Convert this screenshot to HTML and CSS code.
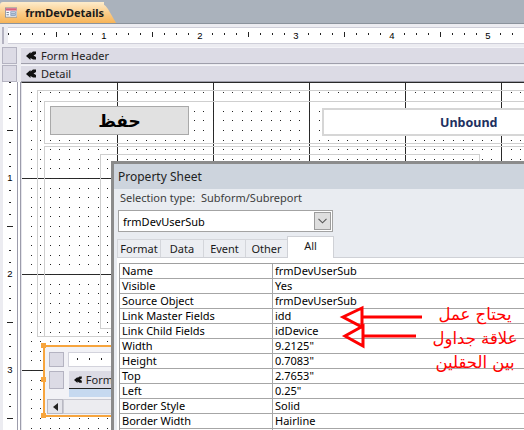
FILE: index.html
```html
<!DOCTYPE html>
<html>
<head>
<meta charset="utf-8">
<link rel="stylesheet" href="styles.css">
</head>
<body>
<div class="app">
  <div class="tabbar">
    <div class="doc-tab">
      <svg class="form-icon" width="16" height="13" viewBox="0 0 16 13">
        <rect x="0.5" y="0.5" width="15" height="12" fill="#f5f7fb" stroke="#7f8a99"/>
        <rect x="1" y="1" width="14" height="3" fill="#d9607c"/>
        <rect x="2" y="6" width="3" height="1" fill="#56657a"/>
        <rect x="2" y="9" width="3" height="1" fill="#56657a"/>
        <rect x="7.5" y="5.5" width="6" height="2" fill="#dbe4f0" stroke="#7e95b5"/>
        <rect x="7.5" y="8.5" width="6" height="2" fill="#dbe4f0" stroke="#7e95b5"/>
      </svg>
      <span class="doc-title">frmDevDetails</span>
    </div>
  </div>

  <div class="designer">
    <div class="row ruler-row">
      <div class="box"></div>
      <div class="hruler">
        <div class="hnums"><span>1</span><span>2</span><span>3</span><span>4</span><span>5</span></div>
      </div>
    </div>
    <div class="row section">
      <div class="box"></div>
      <div class="section-bar">
        <svg class="sec-glyph" width="10" height="10" viewBox="0 0 10 10"><path d="M0 5 L4.5 1 L4.5 2.5 L7 0.5 L10 0.5 L10 3 L7.5 4.5 L10 6 L10 8.5 L7 8.5 L4.5 7 L4.5 9 Z" fill="#111"/></svg>
        <span>Form Header</span>
      </div>
    </div>
    <div class="row section">
      <div class="box"></div>
      <div class="section-bar">
        <svg class="sec-glyph" width="10" height="10" viewBox="0 0 10 10"><path d="M0 5 L4.5 1 L4.5 2.5 L7 0.5 L10 0.5 L10 3 L7.5 4.5 L10 6 L10 8.5 L7 8.5 L4.5 7 L4.5 9 Z" fill="#111"/></svg>
        <span>Detail</span>
      </div>
    </div>
    <div class="row body-row">
      <div class="vruler">
        <div class="vnums"><span>1</span><span>2</span><span>3</span></div>
      </div>
      <div class="canvas">
        <div class="outline rect-a"></div>
        <div class="outline rect-b"></div>
        <div class="outline rect-c"></div>
        <div class="outline rect-d"></div>
        <div class="ctl-button">حفظ</div>
        <div class="ctl-text">Unbound</div>
        <div class="subform-wrap">
          <div class="subform">
            <div class="sf-row1"><div class="sf-box"></div><div class="sf-ruler"></div></div>
            <div class="sf-row2">
              <div class="sf-box tall"></div>
              <div class="sf-col">
                <div class="sf-bar">
                  <svg class="sec-glyph" width="10" height="10" viewBox="0 0 10 10"><path d="M0 5 L4.5 1 L4.5 2.5 L7 0.5 L10 0.5 L10 3 L7.5 4.5 L10 6 L10 8.5 L7 8.5 L4.5 7 L4.5 9 Z" fill="#111"/></svg>
                  <span class="sf-label">Form</span>
                </div>
                <div class="sf-detail"></div>
              </div>
            </div>
            <div class="sf-scroll"><div class="sf-arrow"><svg width="5" height="8" viewBox="0 0 5 8"><path d="M5 0 L0 4 L5 8 Z" fill="#222"/></svg></div><div class="sf-track"></div></div>
          </div>
          <span class="handle h-top"></span>
          <span class="handle h-mid"></span>
          <span class="handle h-bot"></span>
        </div>
      </div>
    </div>
  </div>

  <div class="prop-sheet">
    <div class="ps-title">Property Sheet</div>
    <div class="ps-body">
      <div class="ps-seltype">Selection type:&nbsp;&nbsp;Subform/Subreport</div>
      <div class="ps-combo">
        <span class="combo-text">frmDevUserSub</span>
        <span class="combo-btn"><svg width="9" height="6" viewBox="0 0 9 6"><path d="M0.5 0.8 L4.5 4.8 L8.5 0.8" fill="none" stroke="#555" stroke-width="1.1"/></svg></span>
      </div>
      <div class="ps-tabs">
        <div class="ps-tab t-format">Format</div>
        <div class="ps-tab t-data">Data</div>
        <div class="ps-tab t-event">Event</div>
        <div class="ps-tab t-other">Other</div>
        <div class="ps-tab t-all active">All</div>
      </div>
      <div class="ps-panel">
        <div class="ps-grid">
          <div class="pr"><span class="pl">Name</span><span class="pv">frmDevUserSub</span></div>
          <div class="pr"><span class="pl">Visible</span><span class="pv">Yes</span></div>
          <div class="pr"><span class="pl">Source Object</span><span class="pv">frmDevUserSub</span></div>
          <div class="pr"><span class="pl">Link Master Fields</span><span class="pv">idd</span></div>
          <div class="pr"><span class="pl">Link Child Fields</span><span class="pv">idDevice</span></div>
          <div class="pr"><span class="pl">Width</span><span class="pv">9.2125"</span></div>
          <div class="pr"><span class="pl">Height</span><span class="pv">0.7083"</span></div>
          <div class="pr"><span class="pl">Top</span><span class="pv">2.7653"</span></div>
          <div class="pr"><span class="pl">Left</span><span class="pv">0.25"</span></div>
          <div class="pr"><span class="pl">Border Style</span><span class="pv">Solid</span></div>
          <div class="pr"><span class="pl">Border Width</span><span class="pv">Hairline</span></div>
          <div class="pr"><span class="pl"></span><span class="pv"></span></div>
        </div>
      </div>
    </div>
  </div>

  <svg class="annot" width="524" height="430" viewBox="0 0 524 430">
    <g fill="none" stroke="#ff0000" stroke-width="3">
      <path d="M362 317 L422 317"/>
      <path d="M362 308 L343 317 L362 327 Z"/>
      <path d="M363 336 L416 336"/>
      <path d="M363 326 L345 336 L363 346 Z"/>
    </g>
  </svg>
  <div class="annot-text">يحتاج عمل<br>علاقة جداول<br>بين الحقلين</div>
</div>
</body>
</html>
```

FILE: styles.css
```css
* { box-sizing: border-box; }

body {
  margin: 0;
  font-family: "Noto Sans", "DejaVu Sans", sans-serif;
  color: #000;
}

.app {
  position: relative;
  width: 524px;
  height: 430px;
  overflow: hidden;
  background: #ececf1;
}

/* ---------- document tab bar ---------- */
.tabbar {
  height: 24px;
  padding-top: 2px;
  background: #aab2bc;
  border-bottom: 1px solid #8b939c;
  display: flex;
}

.doc-tab {
  position: relative;
  z-index: 0;
  width: 104px;
  height: 21px;
  display: flex;
  align-items: center;
  gap: 8px;
  padding-left: 5px;
  border-top-left-radius: 3px;
  background: linear-gradient(#fdeccc, #fbcb86 55%, #f7b458);
}

.doc-tab::after {
  content: "";
  position: absolute;
  z-index: -1;
  top: 0;
  bottom: 0;
  right: -6px;
  width: 20px;
  background: linear-gradient(#fdeccc, #fbcb86 55%, #f7b458);
  transform: skewX(30deg);
  border-top-right-radius: 7px;
}

.doc-title {
  font-size: 11px;
  font-weight: bold;
  color: #1a1a1a;
}

/* ---------- designer ---------- */
.designer {
  padding-top: 3px;
  display: flex;
  flex-direction: column;
  height: 406px;
}

.row { display: flex; }

.ruler-row { height: 17px; margin-bottom: 3px; }
.section { height: 17px; margin-bottom: 1px; }
.section + .section { margin-bottom: 0; }

.box {
  width: 15px;
  margin-left: 2px;
  margin-right: 4px;
  background: #dcdbe5;
  border: 1px solid #b4b3c1;
}

.hruler {
  flex: 1;
  position: relative;
  background-color: #fff;
  border-top: 1px solid #cfcfd9;
  border-bottom: 1px solid #cfcfd9;
  background-image:
    linear-gradient(to right, #222 1px, transparent 1px),
    linear-gradient(to right, #222 1px, transparent 1px);
  background-size: 12px 2px, 96px 5px;
  background-position: 0 5px, 48px 4px;
  background-repeat: repeat-x, repeat-x;
}

.hnums {
  display: flex;
  padding-left: 92px;
  height: 15px;
  align-items: center;
}

.hnums span {
  width: 8px;
  margin-right: 88px;
  text-align: center;
  background: #fff;
  font: 9.5px/11px "Liberation Sans", sans-serif;
}

.section-bar {
  flex: 1;
  display: flex;
  align-items: center;
  gap: 5px;
  padding-left: 5px;
  background: #dcdbe5;
  border-top: 1px solid #f4f4f8;
  border-bottom: 1px solid #9f9fab;
  font-size: 11px;
  color: #222;
}

.body-row { flex: 1; }

.vruler {
  width: 18px;
  margin-left: 3px;
  background-color: #fff;
  border-right: 4px double #9c9cab;
  background-image:
    linear-gradient(#222 1px, transparent 1px),
    linear-gradient(#222 1px, transparent 1px);
  background-size: 2px 12px, 6px 96px;
  background-position: 6px 0, 4px 48px;
  background-repeat: repeat-y, repeat-y;
}

.vnums {
  display: flex;
  flex-direction: column;
  padding-top: 90px;
}

.vnums span {
  height: 12px;
  margin-bottom: 84px;
  text-align: center;
  background: #fff;
  font: 9.5px/12px "Liberation Sans", sans-serif;
}

.canvas {
  flex: 1;
  position: relative;
  background-color: #fff;
  border-top: 1px solid #2a2a2a;
  border-left: 1px solid #e6e6ec;
  background-image:
    linear-gradient(to right, transparent 95px, #2a2a2a 95px),
    linear-gradient(to bottom, transparent 95px, #2a2a2a 95px);
  background-size: 96px 100%, 100% 96px;
}

.canvas::before {
  content: "";
  position: absolute;
  inset: 0;
  background: linear-gradient(to right,
    transparent 9px, #222 9px 10px, transparent 10px 18px, #222 18px 19px,
    transparent 19px 28px, #222 28px 29px, transparent 29px 37px, #222 37px 38px,
    transparent 38px 47px, #222 47px 48px, transparent 48px 57px, #222 57px 58px,
    transparent 58px 66px, #222 66px 67px, transparent 67px 76px, #222 76px 77px,
    transparent 77px 85px, #222 85px 86px, transparent 86px 95px, #222 95px 96px) 0 0 / 96px 100%;
  -webkit-mask: linear-gradient(to bottom,
    transparent 9px, #000 9px 10px, transparent 10px 18px, #000 18px 19px,
    transparent 19px 28px, #000 28px 29px, transparent 29px 37px, #000 37px 38px,
    transparent 38px 47px, #000 47px 48px, transparent 48px 57px, #000 57px 58px,
    transparent 58px 66px, #000 66px 67px, transparent 67px 76px, #000 76px 77px,
    transparent 77px 85px, #000 85px 86px, transparent 86px 95px, #000 95px 96px) 0 0 / 100% 96px;
  mask: linear-gradient(to bottom,
    transparent 9px, #000 9px 10px, transparent 10px 18px, #000 18px 19px,
    transparent 19px 28px, #000 28px 29px, transparent 29px 37px, #000 37px 38px,
    transparent 38px 47px, #000 47px 48px, transparent 48px 57px, #000 57px 58px,
    transparent 58px 66px, #000 66px 67px, transparent 67px 76px, #000 76px 77px,
    transparent 77px 85px, #000 85px 86px, transparent 86px 95px, #000 95px 96px) 0 0 / 100% 96px;
}

/* controls on the design canvas (free canvas) */
.outline {
  position: absolute;
  border: 1px solid #cfcfcf;
}
.rect-a { left: 15px; top: 7px; width: 700px; height: 247px; }
.rect-b { left: 22px; top: 18px; width: 700px; height: 43px; }
.rect-c { left: 22px; top: 63px; width: 700px; height: 191px; }
.rect-d { left: 78px; top: 71px; width: 380px; height: 175px; }

.ctl-button {
  position: absolute;
  left: 28px;
  top: 23px;
  width: 139px;
  height: 29px;
  background: #e1e1e1;
  border: 1px solid #a9a9a9;
  display: flex;
  align-items: center;
  justify-content: center;
  font: bold 17px "DejaVu Sans", sans-serif;
  color: #000;
}

.ctl-text {
  position: absolute;
  left: 300px;
  top: 25px;
  width: 300px;
  height: 28px;
  background: #fff;
  border: 2px solid #d6d6d6;
  padding-left: 116px;
  display: flex;
  align-items: center;
  font-size: 12.5px;
  font-weight: bold;
  color: #1d3060;
}

/* selected subform control */
.subform-wrap {
  position: absolute;
  left: 21px;
  top: 262px;
  width: 70px;
  height: 72px;
}

.subform {
  width: 100%;
  height: 100%;
  overflow: hidden;
  border: 2px solid #f7a53e;
  border-right: none;
  background: #f2f2f6;
  padding: 5px 0 0 4px;
}

.sf-row1 { display: flex; height: 15px; gap: 4px; }
.sf-box {
  width: 15px;
  flex: none;
  background: #dcdbe5;
  border: 1px solid #b4b3c1;
}
.sf-box.tall { height: 18px; }
.sf-ruler {
  flex: 1;
  background-color: #fff;
  border: 1px solid #d3d3dc;
  background-image: linear-gradient(to right, #222 1px, transparent 1px);
  background-size: 12px 2px;
  background-position: 8px 5px;
  background-repeat: repeat-x;
}
.sf-row2 { display: flex; gap: 5px; margin-top: 4px; }
.sf-col { flex: 1; min-width: 0; }
.sf-bar {
  height: 18px;
  display: flex;
  align-items: center;
  gap: 4px;
  padding-left: 5px;
  background: #dcdbe5;
  border-bottom: 1px solid #222;
  font-size: 11px;
  color: #222;
  white-space: nowrap;
  overflow: hidden;
}
.sf-detail { height: 8px; background: #c6d9f0; }
.sf-scroll { display: flex; height: 15px; margin: 2px 0 0 -2px; }
.sf-arrow {
  width: 16px;
  flex: none;
  display: flex;
  align-items: center;
  justify-content: center;
  background: #e4e4ea;
  border: 1px solid #b9b9c3;
}
.sf-track { flex: 1; background: #ececf0; border: 1px solid #c9c9d1; }

.handle {
  position: absolute;
  width: 5px;
  height: 5px;
  background: #f7a53e;
  left: -2px;
}
.h-top { top: -2px; }
.h-mid { top: 32px; }
.h-bot { top: 68px; }

/* ---------- property sheet (floating window) ---------- */
.prop-sheet {
  position: absolute;
  left: 111px;
  top: 161px;
  width: 430px;
  height: 280px;
  background: #e9ecf1;
  border-left: 3px solid #8b8b8b;
  border-top: 3px solid #8b8b8b;
  font-size: 11px;
}

.ps-title {
  height: 25px;
  line-height: 25px;
  padding-left: 4px;
  background: #cdd4dd;
  font-size: 12px;
  color: #222;
}

.ps-body { padding-left: 3px; }

.ps-seltype {
  height: 18px;
  line-height: 18px;
  padding-left: 3px;
  color: #3c3c3c;
}

.ps-combo {
  margin: 3px 0 0 1px;
  width: 215px;
  height: 22px;
  background: #fff;
  border: 1px solid #a3a3a3;
  display: flex;
  align-items: center;
  padding: 1px 1px 1px 4px;
}
.combo-text { flex: 1; }
.combo-btn {
  width: 17px;
  height: 18px;
  background: #dedede;
  border: 1px solid #9c9c9c;
  display: flex;
  align-items: center;
  justify-content: center;
}

.ps-tabs {
  display: flex;
  align-items: flex-end;
  height: 21px;
  margin-top: 4px;
}
.ps-tab {
  height: 18px;
  line-height: 17px;
  text-align: center;
  background: #eceef2;
  border: 1px solid #d4d6db;
  border-bottom: none;
  margin-right: -1px;
  color: #1a1a1a;
}
.t-format { width: 44px; }
.t-data { width: 44px; }
.t-event { width: 43px; }
.t-other { width: 43px; }
.t-all { width: 47px; }
.ps-tab.active {
  height: 22px;
  line-height: 18px;
  background: #fff;
  border-color: #cfd1d6;
  position: relative;
  z-index: 1;
  margin-bottom: -1px;
}

.ps-panel {
  background: #fff;
  border-top: 1px solid #cfd1d6;
  padding: 5px 0 0 2px;
  height: 200px;
}

.ps-grid {
  border-top: 1px solid #a0a0a0;
  border-left: 1px solid #a0a0a0;
}
.pr {
  display: flex;
  height: 15px;
  border-bottom: 1px solid #a6a6a6;
  line-height: 14px;
}
.pl {
  width: 153px;
  padding-left: 2px;
  border-right: 1px solid #a6a6a6;
}
.pv { padding-left: 2px; }

/* ---------- annotation overlay ---------- */
.annot {
  position: absolute;
  left: 0;
  top: 0;
  pointer-events: none;
}
.annot-text {
  position: absolute;
  left: 427px;
  top: 303px;
  width: 96px;
  direction: rtl;
  text-align: center;
  color: #ff0000;
  font: 16.5px/24px "DejaVu Sans", sans-serif;
}
```
